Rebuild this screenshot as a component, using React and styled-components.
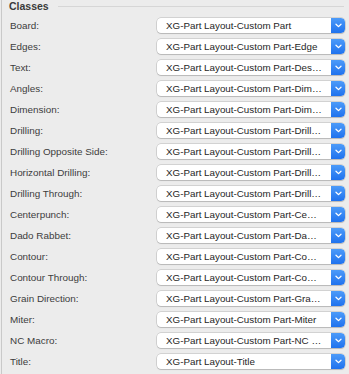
import React from "react";
import styled, { createGlobalStyle } from "styled-components";

const Global = createGlobalStyle`
  html, body { margin: 0; padding: 0; background: #ececec; }
  body { font-family: "Liberation Sans", Arial, sans-serif; }
`;

const Panel = styled.div`
  width: 348px;
  height: 374px;
  box-sizing: border-box;
  border-left: 1px solid #c9c9c9;
  margin-left: 1px;
  padding: 0 4px 0 7px;
  overflow: hidden;
`;

const Header = styled.div`
  display: flex;
  align-items: center;
  height: 12px;
  margin-bottom: 3px;
`;

const Title = styled.span`
  font-size: 10.5px;
  font-weight: bold;
  color: #3a3a3a;
  line-height: 12px;
`;

const Rule = styled.div`
  flex: 1;
  height: 1px;
  background: #d6d6d6;
  margin-left: 9px;
  margin-right: 1px;
`;

const Rows = styled.div`
  display: grid;
  grid-template-columns: 148px 188px;
  grid-auto-rows: 21px;
  align-items: center;
`;

const Label = styled.div`
  font-size: 9.9px;
  color: #3c3c3c;
  padding-left: 1px;
  white-space: nowrap;
`;

const Select = styled.div`
  display: flex;
  align-items: stretch;
  height: 15px;
  background: #fff;
  border-radius: 4px;
  box-shadow: 0 0 0 0.5px rgba(0,0,0,0.22), 0 1px 1px rgba(0,0,0,0.12);
  overflow: hidden;
`;

const Value = styled.div`
  flex: 1;
  min-width: 0;
  font-size: 9.8px;
  line-height: 15px;
  color: #262626;
  padding-left: 9px;
  padding-right: 9px;
  white-space: nowrap;
  overflow: hidden;
  text-overflow: ellipsis;
`;

const Button = styled.div`
  width: 14px;
  display: flex;
  align-items: center;
  justify-content: center;
  background: linear-gradient(#4c9bf9, #1f72ee);
  border-radius: 0 4px 4px 0;
`;

const Chevron = () => (
  <svg width="7" height="5" viewBox="0 0 7 5">
    <path d="M1 1.2 L3.5 3.6 L6 1.2" fill="none" stroke="#fff" strokeWidth="1.3" strokeLinecap="round" strokeLinejoin="round" />
  </svg>
);

const rows = [
  ["Board:", "XG-Part Layout-Custom Part"],
  ["Edges:", "XG-Part Layout-Custom Part-Edge"],
  ["Text:", "XG-Part Layout-Custom Part-Description"],
  ["Angles:", "XG-Part Layout-Custom Part-Dimension Angles"],
  ["Dimension:", "XG-Part Layout-Custom Part-Dimension"],
  ["Drilling:", "XG-Part Layout-Custom Part-Drilling"],
  ["Drilling Opposite Side:", "XG-Part Layout-Custom Part-Drilling Opposite"],
  ["Horizontal Drilling:", "XG-Part Layout-Custom Part-Drilling Horizontal"],
  ["Drilling Through:", "XG-Part Layout-Custom Part-Drilling Through"],
  ["Centerpunch:", "XG-Part Layout-Custom Part-Centerpunch"],
  ["Dado Rabbet:", "XG-Part Layout-Custom Part-Dado Rabbet"],
  ["Contour:", "XG-Part Layout-Custom Part-Contour"],
  ["Contour Through:", "XG-Part Layout-Custom Part-Contour Through"],
  ["Grain Direction:", "XG-Part Layout-Custom Part-Grain Direction"],
  ["Miter:", "XG-Part Layout-Custom Part-Miter"],
  ["NC Macro:", "XG-Part Layout-Custom Part-NC Macro"],
  ["Title:", "XG-Part Layout-Title"],
];

export default function App() {
  return (
    <>
      <Global />
      <Panel>
        <Header>
          <Title>Classes</Title>
          <Rule />
        </Header>
        <Rows>
          {rows.map(([l, v]) => (
            <React.Fragment key={l}>
              <Label>{l}</Label>
              <Select>
                <Value>{v}</Value>
                <Button><Chevron /></Button>
              </Select>
            </React.Fragment>
          ))}
        </Rows>
      </Panel>
    </>
  );
}
